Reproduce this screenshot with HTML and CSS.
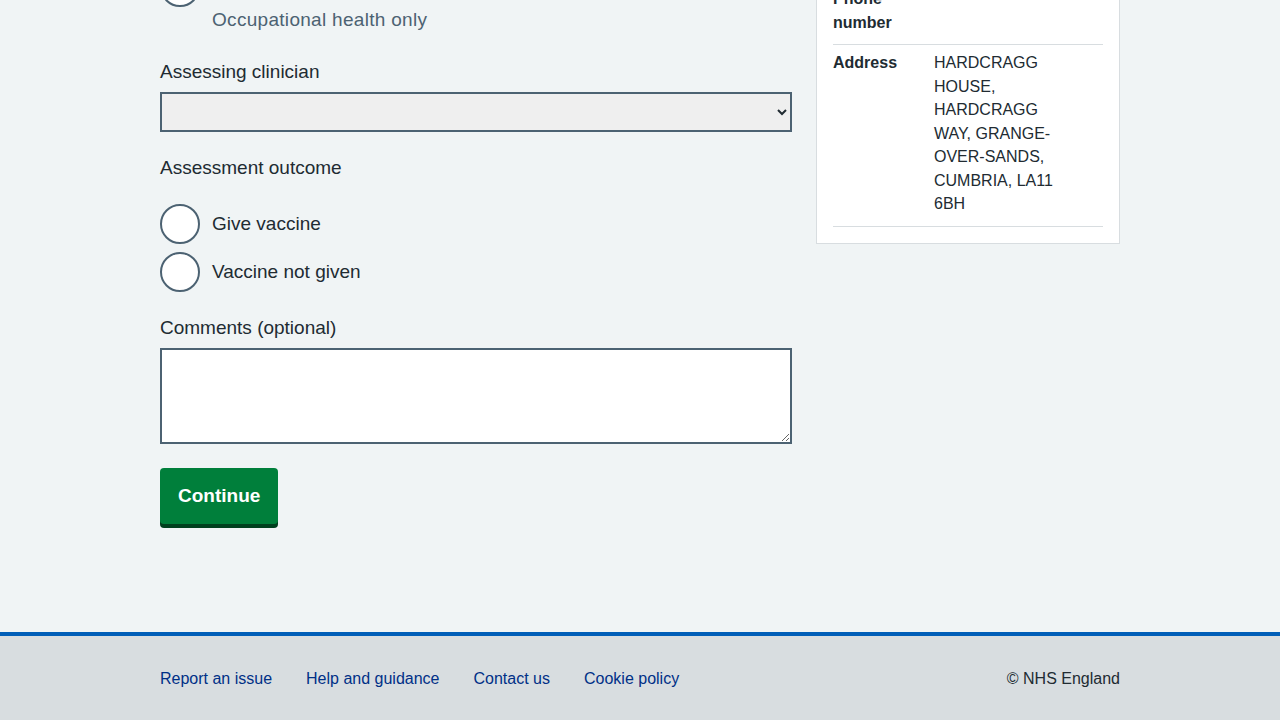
FILE: index.html
```html
<!DOCTYPE html>
<html lang="en">
<head>
<meta charset="utf-8">
<title>Assessment</title>
<link rel="stylesheet" href="styles.css">
</head>
<body>
<main class="main">
  <form class="form">
    <div class="radio">
      <input type="radio" id="r-oh" name="eligibility">
      <label for="r-oh">Healthcare worker</label>
    </div>
    <div class="hint">Occupational health only</div>

    <div class="group">
      <label class="label" for="clinician">Assessing clinician</label>
      <select id="clinician" class="select">
        <option></option>
      </select>
    </div>

    <fieldset class="group-tight">
      <legend class="legend">Assessment outcome</legend>
      <div class="radios">
        <div class="radio">
          <input type="radio" id="r-give" name="outcome">
          <label for="r-give">Give vaccine</label>
        </div>
        <div class="radio">
          <input type="radio" id="r-not" name="outcome">
          <label for="r-not">Vaccine not given</label>
        </div>
      </div>
    </fieldset>

    <div class="group-tight">
      <label class="label" for="comments">Comments (optional)</label>
      <textarea id="comments" class="textarea"></textarea>
    </div>

    <button type="submit" class="button">Continue</button>
  </form>

  <aside class="card">
    <dl class="summary">
      <div class="row">
        <dt class="key">Phone number</dt>
        <dd class="value"></dd>
      </div>
      <div class="row">
        <dt class="key">Address</dt>
        <dd class="value">HARDCRAGG HOUSE, HARDCRAGG WAY, GRANGE-OVER-SANDS, CUMBRIA, LA11 6BH</dd>
      </div>
    </dl>
  </aside>
</main>

<footer class="footer">
  <div class="footer-inner">
    <ul class="footer-links">
      <li><a href="#">Report an issue</a></li>
      <li><a href="#">Help and guidance</a></li>
      <li><a href="#">Contact us</a></li>
      <li><a href="#">Cookie policy</a></li>
    </ul>
    <p class="copyright">© NHS England</p>
  </div>
</footer>
</body>
</html>
```
FILE: styles.css
```css
* { box-sizing: border-box; }

body {
  margin: 0;
  background: #f0f4f5;
  font-family: "Liberation Sans", Arial, sans-serif;
  color: #212b32;
}

.main {
  width: 960px;
  margin: -37px auto 0;
  padding-bottom: 108px;
  display: grid;
  grid-template-columns: 632px 304px;
  column-gap: 24px;
  align-items: start;
}

.form {
  padding-top: 4px;
}

.radio {
  display: flex;
  align-items: center;
  gap: 12px;
  min-height: 40px;
}

.radio input {
  appearance: none;
  -webkit-appearance: none;
  flex: none;
  width: 40px;
  height: 40px;
  margin: 0;
  border: 2px solid #4c6272;
  border-radius: 50%;
  background: #fff;
}

.radio label {
  font-size: 19px;
  line-height: 28px;
}

.hint {
  margin-top: -1px;
  padding-left: 52px;
  color: #4c6272;
  font-size: 19px;
  line-height: 28px;
  letter-spacing: 0.3px;
}

.group {
  margin-top: 24px;
}

.group-tight {
  margin: 22px 0 0;
  padding: 0;
  border: 0;
}

.label,
.legend {
  display: block;
  padding: 0;
  font-size: 19px;
  line-height: 28px;
}

.label {
  margin-bottom: 6px;
}

.radios {
  display: flex;
  flex-direction: column;
  gap: 8px;
  padding-top: 22px;
}

.select {
  display: block;
  width: 100%;
  height: 40px;
  margin: 0;
  border: 2px solid #4c6272;
  border-radius: 0;
  background-color: #efefef;
  font-family: inherit;
  font-size: 19px;
  color: #212b32;
}

.textarea {
  display: block;
  width: 100%;
  height: 96px;
  margin: 0;
  border: 2px solid #4c6272;
  border-radius: 0;
  background: #fff;
  font-family: inherit;
  font-size: 19px;
}

.button {
  display: block;
  margin-top: 24px;
  padding: 12px 16px;
  border: 2px solid transparent;
  border-radius: 4px;
  background: #007f3b;
  box-shadow: 0 4px 0 #00401e;
  color: #fff;
  font-family: inherit;
  font-size: 19px;
  font-weight: bold;
  line-height: 28px;
}

.card {
  margin-top: 1px;
  background: #fff;
  border: 1px solid #d8dde0;
  padding: 16px;
}

.summary {
  margin: 0;
}

.row {
  display: flex;
  padding: 6px 0 10px;
  border-bottom: 1px solid #d8dde0;
  font-size: 16px;
  line-height: 23.5px;
}

.key {
  flex: none;
  width: 101px;
  padding-right: 24px;
  font-weight: bold;
}

.value {
  width: 136px;
  margin: 0;
}

.footer {
  border-top: 4px solid #005eb8;
  background: #d8dde0;
  padding: 31px 0 29px;
}

.footer-inner {
  width: 960px;
  margin: 0 auto;
  display: flex;
  justify-content: space-between;
  align-items: center;
  font-size: 16px;
  line-height: 24px;
}

.footer-links {
  display: flex;
  gap: 34px;
  margin: 0;
  padding: 0;
  list-style: none;
}

.footer-links a {
  color: #003087;
  text-decoration: none;
}

.copyright {
  margin: 0;
  color: #212b32;
}
```
